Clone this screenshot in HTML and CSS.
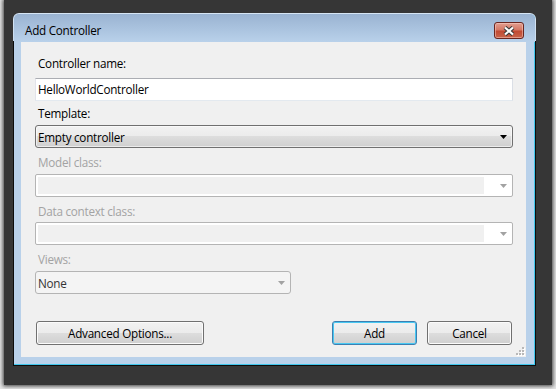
FILE: index.html
```html
<!DOCTYPE html>
<html>
<head>
<meta charset="utf-8">
<link rel="stylesheet" href="styles.css">
</head>
<body>
<div class="backdrop">
  <div class="window">
    <div class="frame">
      <div class="titlebar">
        <span class="title">Add Controller</span>
        <button class="close" aria-label="Close">
          <svg width="14" height="10" viewBox="0 0 14 10">
            <path d="M3 1.5 L11 8.5 M11 1.5 L3 8.5" stroke="#3a3a3a" stroke-width="4.2" fill="none"/>
            <path d="M3 1.5 L11 8.5 M11 1.5 L3 8.5" stroke="#ffffff" stroke-width="2.2" fill="none"/>
          </svg>
        </button>
      </div>
      <div class="client">
        <div class="label l1">Controller name:</div>
        <div class="textbox">HelloWorldController</div>
        <div class="label l2">Template:</div>
        <div class="combo enabled">
          <span class="value">Empty controller</span>
          <svg class="arrow" width="7" height="4" viewBox="0 0 7 4"><path d="M0 0H7L3.5 4Z" fill="#000"/></svg>
        </div>
        <div class="label disabled l3">Model class:</div>
        <div class="combo off">
          <span class="well"></span>
          <svg class="arrow" width="7" height="4" viewBox="0 0 7 4"><path d="M0 0H7L3.5 4Z" fill="#a2a2a2"/></svg>
        </div>
        <div class="label disabled l4">Data context class:</div>
        <div class="combo off c4">
          <span class="well"></span>
          <svg class="arrow" width="7" height="4" viewBox="0 0 7 4"><path d="M0 0H7L3.5 4Z" fill="#a2a2a2"/></svg>
        </div>
        <div class="label disabled l5">Views:</div>
        <div class="combo views">
          <span class="value">None</span>
          <svg class="arrow" width="7" height="4" viewBox="0 0 7 4"><path d="M0 0H7L3.5 4Z" fill="#a2a2a2"/></svg>
        </div>
        <div class="buttons">
          <button class="btn adv">Advanced Options...</button>
          <span class="spacer"></span>
          <button class="btn default">Add</button>
          <button class="btn">Cancel</button>
        </div>
        <svg class="grip" width="10" height="10" viewBox="0 0 10 10">
          <g fill="#ffffff">
            <rect x="8" y="2" width="2" height="2"/>
            <rect x="5" y="5" width="2" height="2"/><rect x="8" y="5" width="2" height="2"/>
            <rect x="2" y="8" width="2" height="2"/><rect x="5" y="8" width="2" height="2"/><rect x="8" y="8" width="2" height="2"/>
          </g>
          <g fill="#b8b8b8">
            <rect x="7" y="1" width="2" height="2"/>
            <rect x="4" y="4" width="2" height="2"/><rect x="7" y="4" width="2" height="2"/>
            <rect x="1" y="7" width="2" height="2"/><rect x="4" y="7" width="2" height="2"/><rect x="7" y="7" width="2" height="2"/>
          </g>
        </svg>
      </div>
    </div>
  </div>
</div>
</body>
</html>
```

FILE: styles.css
```css
html, body {
  margin: 0;
  padding: 0;
}
body {
  background: #e6e6e6;
  width: 556px;
  height: 389px;
  overflow: hidden;
  font-family: "Open Sans", "Noto Sans", sans-serif;
  font-size: 11.7px;
  letter-spacing: -0.25px;
  color: #000;
}
.backdrop {
  margin: 0 4px 0 4px;
  height: 385px;
  background: #363636;
  box-shadow: 0 0 4px 1px rgba(40, 40, 40, 0.9);
  padding: 13px 16px 0 9px;
  box-sizing: border-box;
}
.window {
  width: 523px;
  height: 353px;
  padding: 1px;
  box-sizing: border-box;
  border-radius: 6px 6px 0 0;
  background: linear-gradient(to bottom, #d6e5f4 0, #c9dcef 28px, #0c0c0c 28px, #0c0c0c 100%);
}
.frame {
  height: 351px;
  border-radius: 5px 5px 0 0;
  background: #b9d1ea;
  box-shadow: inset -1px -1px 0 #3fc6ec;
  display: flex;
  flex-direction: column;
}
.titlebar {
  height: 28px;
  flex: none;
  display: flex;
  align-items: flex-start;
  border-radius: 5px 5px 0 0;
  background: linear-gradient(to bottom, #9ab3d1 0%, #a9c2de 50%, #b9d1ea 100%);
}
.title {
  flex: 1;
  padding: 8px 0 0 11px;
  line-height: 16px;
  color: #000;
}
.close {
  width: 30px;
  height: 17px;
  margin: 8px 11px 0 0;
  padding: 0;
  border: 1px solid #6a2620;
  border-radius: 3px;
  background: linear-gradient(to bottom, #e29e90 0%, #d57966 45%, #c14a33 55%, #c8644b 100%);
  box-shadow: inset 0 0 0 1px rgba(255, 220, 210, 0.45);
  display: flex;
  align-items: center;
  justify-content: center;
}
.client {
  position: relative;
  height: 315px;
  margin: 0 9px 0 7px;
  background: #f0f0f0;
  padding: 0 13px 0 14px;
  box-sizing: border-box;
  display: flex;
  flex-direction: column;
}
.label {
  height: 16px;
  line-height: 16px;
  padding-left: 3px;
  white-space: nowrap;
}
.label.disabled {
  color: #a3a3a3;
}
.l1 { margin-top: 13px; margin-bottom: 7px; }
.l2 { margin-top: 4px; margin-bottom: 4px; }
.l3 { margin-top: 6px; margin-bottom: 4px; }
.l4 { margin-top: 6px; margin-bottom: 3px; }
.l5 { margin-top: 6px; margin-bottom: 4px; }
.textbox {
  height: 23px;
  box-sizing: border-box;
  border: 1px solid;
  border-color: #abadb3 #dbdfe6 #e3e9ef #e2e3ea;
  background: #fff;
  padding-left: 2px;
  line-height: 21px;
}
.combo {
  height: 23px;
  box-sizing: border-box;
  display: flex;
  align-items: center;
  border-radius: 3px;
}
.combo .value {
  flex: 1;
  padding-left: 2px;
}
.combo .arrow {
  margin-right: 5px;
  flex: none;
}
.combo.enabled {
  border: 1px solid #707070;
  background: linear-gradient(to bottom, #f2f2f2 0%, #ebebeb 50%, #dddddd 50%, #cfcfcf 100%);
  box-shadow: inset 0 0 0 1px rgba(255, 255, 255, 0.6);
}
.combo.off {
  border: 1px solid #b4b4b4;
  border-radius: 2px;
  background: #fff;
  padding: 2px;
  align-items: stretch;
}
.combo.off .well {
  flex: 1;
  background: #f0f0f0;
  margin-right: 16px;
}
.combo.off .arrow {
  align-self: center;
  margin-right: 3px;
}
.combo.views {
  width: 256px;
  border: 1px solid #b4b4b4;
  background: #f4f4f4;
  color: #333333;
}
.buttons {
  margin-top: 27px;
  display: flex;
  gap: 10px;
  padding: 0 1px;
}
.spacer {
  flex: 1;
}
.btn {
  height: 24px;
  width: 85px;
  padding: 0;
  font-family: inherit;
  font-size: inherit;
  letter-spacing: inherit;
  color: #000;
  border: 1px solid #707070;
  border-radius: 3px;
  background: linear-gradient(to bottom, #f2f2f2 0%, #ebebeb 50%, #dddddd 50%, #cfcfcf 100%);
  box-shadow: inset 0 0 0 1px #fbfbfb;
}
.btn.adv {
  width: 168px;
}
.btn.default {
  border-color: #3c7fb1;
  box-shadow: inset 0 0 0 1px #48c8f2;
}
.grip {
  position: absolute;
  right: 1px;
  bottom: 1px;
}
```
